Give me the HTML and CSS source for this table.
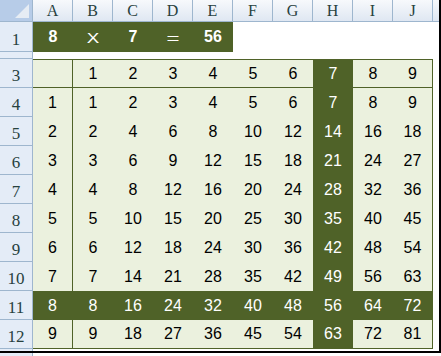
FILE: index.html
```html
<!DOCTYPE html>
<html>
<head>
<meta charset="utf-8">
<link rel="stylesheet" href="styles.css">
</head>
<body>
<div class="sheet">
  <div class="corner"><svg width="33" height="22" viewBox="0 0 33 22"><polygon points="29,4 29,18 15,18" fill="#e6ecf4"/></svg></div>
  <div class="ch">A</div><div class="ch">B</div><div class="ch">C</div><div class="ch">D</div><div class="ch">E</div>
  <div class="ch">F</div><div class="ch">G</div><div class="ch">H</div><div class="ch">I</div><div class="ch">J</div><div class="ch"></div>

  <div class="rh">1</div>
  <div class="top b">8</div><div class="top op">X</div><div class="top b">7</div><div class="top eq">＝</div><div class="top b">56</div>
  <div class="w"></div><div class="w"></div><div class="w"></div><div class="w"></div><div class="w"></div><div class="w"></div>

  <div class="rh">2</div>
  <div class="w"></div><div class="w"></div><div class="w"></div><div class="w"></div><div class="w"></div>
  <div class="w"></div><div class="w"></div><div class="w"></div><div class="w"></div><div class="w"></div><div class="w"></div>

  <div class="rh">3</div>
  <div class="c hd ca"></div><div class="c hd">1</div><div class="c hd">2</div><div class="c hd">3</div><div class="c hd">4</div><div class="c hd">5</div><div class="c hd">6</div><div class="c hd dk">7</div><div class="c hd">8</div><div class="c hd cj">9</div><div class="w"></div>

  <div class="rh">4</div>
  <div class="c ca">1</div><div class="c">1</div><div class="c">2</div><div class="c">3</div><div class="c">4</div><div class="c">5</div><div class="c">6</div><div class="c dk">7</div><div class="c">8</div><div class="c cj">9</div><div class="w"></div>

  <div class="rh">5</div>
  <div class="c ca">2</div><div class="c">2</div><div class="c">4</div><div class="c">6</div><div class="c">8</div><div class="c">10</div><div class="c">12</div><div class="c dk">14</div><div class="c">16</div><div class="c cj">18</div><div class="w"></div>

  <div class="rh">6</div>
  <div class="c ca">3</div><div class="c">3</div><div class="c">6</div><div class="c">9</div><div class="c">12</div><div class="c">15</div><div class="c">18</div><div class="c dk">21</div><div class="c">24</div><div class="c cj">27</div><div class="w"></div>

  <div class="rh">7</div>
  <div class="c ca">4</div><div class="c">4</div><div class="c">8</div><div class="c">12</div><div class="c">16</div><div class="c">20</div><div class="c">24</div><div class="c dk">28</div><div class="c">32</div><div class="c cj">36</div><div class="w"></div>

  <div class="rh">8</div>
  <div class="c ca">5</div><div class="c">5</div><div class="c">10</div><div class="c">15</div><div class="c">20</div><div class="c">25</div><div class="c">30</div><div class="c dk">35</div><div class="c">40</div><div class="c cj">45</div><div class="w"></div>

  <div class="rh">9</div>
  <div class="c ca">6</div><div class="c">6</div><div class="c">12</div><div class="c">18</div><div class="c">24</div><div class="c">30</div><div class="c">36</div><div class="c dk">42</div><div class="c">48</div><div class="c cj">54</div><div class="w"></div>

  <div class="rh">10</div>
  <div class="c ca">7</div><div class="c">7</div><div class="c">14</div><div class="c">21</div><div class="c">28</div><div class="c">35</div><div class="c">42</div><div class="c dk">49</div><div class="c">56</div><div class="c cj">63</div><div class="w"></div>

  <div class="rh">11</div>
  <div class="c ca dk">8</div><div class="c dk">8</div><div class="c dk">16</div><div class="c dk">24</div><div class="c dk">32</div><div class="c dk">40</div><div class="c dk">48</div><div class="c dk">56</div><div class="c dk">64</div><div class="c cj dk">72</div><div class="w"></div>

  <div class="rh">12</div>
  <div class="c ca last">9</div><div class="c last">9</div><div class="c last">18</div><div class="c last">27</div><div class="c last">36</div><div class="c last">45</div><div class="c last">54</div><div class="c last dk">63</div><div class="c last">72</div><div class="c cj last">81</div><div class="w"></div>

  <div class="rh">13</div>
  <div class="w"></div><div class="w"></div><div class="w"></div><div class="w"></div><div class="w"></div>
  <div class="w"></div><div class="w"></div><div class="w"></div><div class="w"></div><div class="w"></div><div class="w"></div>

  <div class="frame"></div>
</div>
</body>
</html>
```

FILE: styles.css
```css
html, body {
  margin: 0;
  padding: 0;
  background: #ffffff;
}

.sheet {
  position: relative;
  display: grid;
  grid-template-columns: 33px repeat(10, 40px) 8px;
  grid-template-rows: 22px 30px 7px repeat(10, 29px) 29px;
  width: 441px;
  height: 356px;
  overflow: hidden;
  font-family: "Liberation Sans", Arial, sans-serif;
}

.sheet > div {
  box-sizing: border-box;
  overflow: hidden;
}

.corner {
  background: #b7cce8;
  border-right: 1px solid #9eb6ce;
  border-bottom: 1px solid #9eb6ce;
}

.corner svg {
  display: block;
}

.ch {
  display: flex;
  align-items: center;
  justify-content: center;
  background: linear-gradient(#f7f9fc, #dfe7f2);
  border-right: 1px solid #9eb6ce;
  border-bottom: 1px solid #9eb6ce;
  font-family: "Liberation Serif", serif;
  font-size: 16px;
  color: #27413e;
  padding-top: 1px;
}

.rh {
  display: flex;
  align-items: flex-end;
  justify-content: center;
  background: #e4ecf7;
  border-right: 1px solid #9eb6ce;
  border-bottom: 1px solid #9eb6ce;
  font-family: "Liberation Serif", serif;
  font-size: 17px;
  line-height: 16px;
  color: #27413e;
  padding-bottom: 3px;
}

.w {
  background: #ffffff;
}

.top {
  display: flex;
  align-items: center;
  justify-content: center;
  background: #4f6228;
  color: #ffffff;
  font-size: 16px;
}

.top.b {
  font-weight: bold;
}

.top.op {
  font-size: 15px;
  transform: scaleX(1.25);
}

.top.eq {
  font-family: "Noto Sans CJK TC", sans-serif;
  font-size: 15px;
}

.c {
  display: flex;
  align-items: center;
  justify-content: center;
  background: #ebf1de;
  color: #000000;
  font-size: 16px;
}

.c.hd {
  border-top: 1px solid #4f6228;
  border-bottom: 1px solid #4f6228;
}

.c.ca {
  border-right: 1px solid #4f6228;
}

.c.cj {
  border-right: 1px solid #4f6228;
}

.c.last {
  border-bottom: 1px solid #4f6228;
}

.c.dk {
  background: #4f6228;
  color: #ffffff;
}

.frame {
  position: absolute;
  left: 0;
  top: 0;
  width: 441px;
  height: 353px;
  border-right: 2px solid #000000;
  border-bottom: 2px solid #000000;
  pointer-events: none;
}
```
